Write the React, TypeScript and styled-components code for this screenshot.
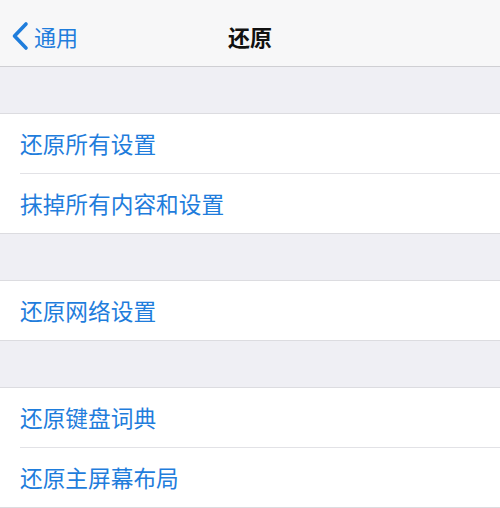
import React from 'react';
import styled, { createGlobalStyle } from 'styled-components';

const GlobalStyle = createGlobalStyle`
  html, body {
    margin: 0;
    padding: 0;
    background: #efeff4;
  }
  body {
    font-family: "Noto Sans CJK SC", "Noto Sans", sans-serif;
    -webkit-font-smoothing: antialiased;
  }
`;

const Page = styled.div`
  width: 500px;
  height: 508px;
  overflow: hidden;
  background: #efeff4;
`;

const NavBar = styled.div`
  display: grid;
  grid-template-columns: 1fr auto 1fr;
  align-items: center;
  height: 67px;
  padding-top: 5px;
  background: #f7f7f8;
  border-bottom: 1px solid #cfcfd3;
  box-sizing: border-box;
`;

const BackButton = styled.div`
  display: flex;
  align-items: center;
  padding-left: 10px;
  color: #1f7ddc;
  font-size: 22px;
  line-height: 1;
`;

const Chevron = styled.svg`
  width: 20px;
  height: 30px;
  margin-right: 4px;
`;

const Title = styled.div`
  font-size: 22px;
  font-weight: 700;
  color: #111;
  line-height: 1;
`;

const Spacer = styled.div`
  height: 46px;
`;

const Group = styled.div`
  background: #fff;
  border-top: 1px solid #dcdce0;
  border-bottom: 1px solid #dcdce0;
`;

const Row = styled.div<{ last?: boolean }>`
  display: flex;
  align-items: center;
  height: ${({ last }) => (last ? '59px' : '60px')};
  margin-left: 20px;
  padding-top: 2px;
  box-sizing: border-box;
  color: #1f7ddc;
  font-size: 22.7px;
  line-height: 1;
  border-bottom: ${({ last }) => (last ? 'none' : '1px solid #e2e2e6')};
`;

const groups = [
  ['还原所有设置', '抹掉所有内容和设置'],
  ['还原网络设置'],
  ['还原键盘词典', '还原主屏幕布局'],
];

export default function App() {
  return (
    <Page>
      <GlobalStyle />
      <NavBar>
        <BackButton>
          <Chevron viewBox="0 0 20 30">
            <path d="M16 3 L4.5 15 L16 27" fill="none" stroke="#1f7ddc" strokeWidth="3.6" strokeLinecap="round" strokeLinejoin="round" />
          </Chevron>
          通用
        </BackButton>
        <Title>还原</Title>
        <div />
      </NavBar>
      {groups.map((items, gi) => (
        <React.Fragment key={gi}>
          <Spacer />
          <Group>
            {items.map((label, i) => (
              <Row key={label} last={i === items.length - 1}>
                {label}
              </Row>
            ))}
          </Group>
        </React.Fragment>
      ))}
    </Page>
  );
}
